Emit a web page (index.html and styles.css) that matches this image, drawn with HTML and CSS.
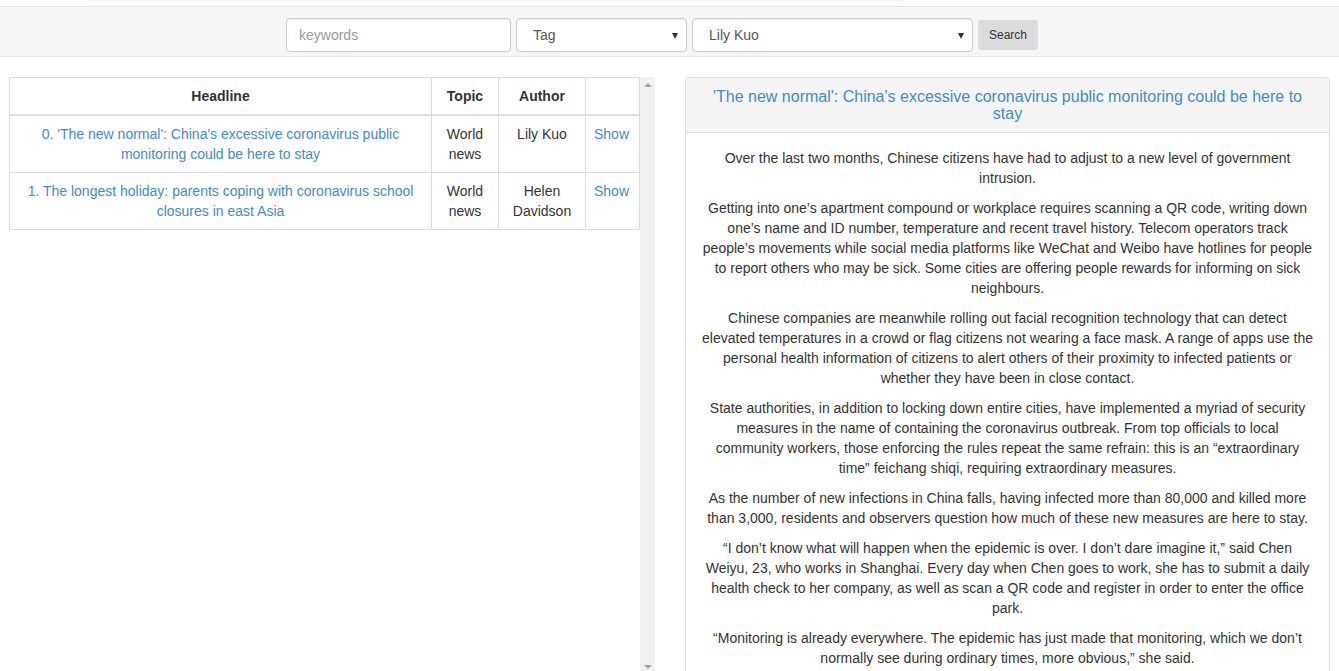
FILE: index.html
```html
<!DOCTYPE html>
<html lang="en">
<head>
<meta charset="utf-8">
<title>News</title>
<link rel="stylesheet" href="styles.css">
</head>
<body>
<div class="topstrip"><div class="topstrip-edge"></div></div>
<nav class="navbar">
  <form class="search-form">
    <input class="form-control kw" type="text" placeholder="keywords">
    <span class="select-wrap tag">
      <select class="form-control">
        <option>Tag</option>
      </select>
    </span>
    <span class="select-wrap author">
      <select class="form-control">
        <option>Lily Kuo</option>
      </select>
    </span>
    <button class="btn-search" type="button">Search</button>
  </form>
</nav>
<main class="main">
  <section class="list-pane">
    <div class="list-content">
      <table class="news-table">
        <colgroup>
          <col class="c-head"><col class="c-topic"><col class="c-author"><col class="c-show">
        </colgroup>
        <thead>
          <tr><th>Headline</th><th>Topic</th><th>Author</th><th></th></tr>
        </thead>
        <tbody>
          <tr>
            <td><a href="#">0. 'The new normal': China's excessive coronavirus public monitoring could be here to stay</a></td>
            <td>World news</td>
            <td>Lily Kuo</td>
            <td><a href="#">Show</a></td>
          </tr>
          <tr>
            <td><a href="#">1. The longest holiday: parents coping with coronavirus school closures in east Asia</a></td>
            <td>World news</td>
            <td>Helen Davidson</td>
            <td><a href="#">Show</a></td>
          </tr>
        </tbody>
      </table>
    </div>
    <div class="scroll-track" aria-hidden="true">
      <span class="arrow-up"></span>
      <span class="arrow-down"></span>
    </div>
  </section>
  <article class="panel">
    <header class="panel-heading">
      <h3 class="panel-title"><a href="#">'The new normal': China's excessive coronavirus public monitoring could be here to stay</a></h3>
    </header>
    <div class="panel-body">
      <p>Over the last two months, Chinese citizens have had to adjust to a new level of government intrusion.</p>
      <p>Getting into one’s apartment compound or workplace requires scanning a QR code, writing down one’s name and ID number, temperature and recent travel history. Telecom operators track people’s movements while social media platforms like WeChat and Weibo have hotlines for people to report others who may be sick. Some cities are offering people rewards for informing on sick neighbours.</p>
      <p>Chinese companies are meanwhile rolling out facial recognition technology that can detect elevated temperatures in a crowd or flag citizens not wearing a face mask. A range of apps use the personal health information of citizens to alert others of their proximity to infected patients or whether they have been in close contact.</p>
      <p>State authorities, in addition to locking down entire cities, have implemented a myriad of security measures in the name of containing the coronavirus outbreak. From top officials to local community workers, those enforcing the rules repeat the same refrain: this is an “extraordinary time” feichang shiqi, requiring extraordinary measures.</p>
      <p>As the number of new infections in China falls, having infected more than 80,000 and killed more than 3,000, residents and observers question how much of these new measures are here to stay.</p>
      <p>“I don’t know what will happen when the epidemic is over. I don’t dare imagine it,” said Chen Weiyu, 23, who works in Shanghai. Every day when Chen goes to work, she has to submit a daily health check to her company, as well as scan a QR code and register in order to enter the office park.</p>
      <p>“Monitoring is already everywhere. The epidemic has just made that monitoring, which we don’t normally see during ordinary times, more obvious,” she said.</p>
    </div>
  </article>
</main>
</body>
</html>
```

FILE: styles.css
```css
* { box-sizing: border-box; }

html, body {
  margin: 0;
  padding: 0;
  height: 100%;
  overflow: hidden;
}

body {
  font-family: "Liberation Sans", Arial, Helvetica, sans-serif;
  font-size: 14px;
  line-height: 20px;
  color: #333;
  background: #fff;
}

a {
  color: #428bca;
  text-decoration: none;
}

.topstrip {
  height: 6px;
  padding-left: 88px;
}

.topstrip-edge {
  width: 813px;
  height: 1px;
  background: #f1f1f1;
}

.navbar {
  border-top: 1px solid #e1e1e1;
  border-bottom: 1px solid #e7e7e7;
  background: #f6f6f6;
  height: 51px;
}

.search-form {
  display: flex;
  justify-content: center;
  align-items: flex-start;
  gap: 5px;
  padding: 11px 15px 0 0;
  margin: 0;
}

.form-control {
  display: block;
  width: 100%;
  height: 34px;
  border: 1px solid #ccc;
  border-radius: 4px;
  background: #fff;
  color: #555;
  font-family: "Liberation Sans", Arial, Helvetica, sans-serif;
  font-size: 14px;
  line-height: 20px;
  padding: 6px 12px;
  box-shadow: inset 0 1px 1px rgba(0,0,0,.075);
}

select.form-control {
  appearance: none;
  -webkit-appearance: none;
  padding-left: 16px;
  padding-right: 24px;
}

.form-control::placeholder { color: #999; }

.kw { width: 225px; }

.select-wrap {
  position: relative;
  display: block;
}

.select-wrap::after {
  content: "";
  position: absolute;
  right: 9px;
  top: 15px;
  border-left: 3.5px solid transparent;
  border-right: 3.5px solid transparent;
  border-top: 6px solid #333;
  pointer-events: none;
}

.tag { width: 171px; }
.author { width: 281px; }

.btn-search {
  margin-top: 2px;
  width: 60px;
  height: 30px;
  border: 1px solid #dcdcdc;
  border-radius: 3px;
  background: #dcdcdc;
  color: #333;
  font-family: "Liberation Sans", Arial, Helvetica, sans-serif;
  font-size: 12px;
  line-height: 18px;
  padding: 5px 0;
}

.main {
  display: flex;
  gap: 30px;
  padding: 20px 9px 0;
  align-items: flex-start;
}

.list-pane {
  flex: 0 0 646px;
  height: 594px;
  display: flex;
}

.list-content {
  flex: 0 0 631px;
}

.scroll-track {
  flex: 0 0 15px;
  background: #f1f1f1;
  display: flex;
  flex-direction: column;
  justify-content: space-between;
  align-items: center;
  padding: 6px 0 2px;
}

.arrow-up,
.arrow-down {
  display: block;
  width: 0;
  height: 0;
  border-left: 4px solid transparent;
  border-right: 4px solid transparent;
}

.arrow-up { border-bottom: 4px solid #a3a3a3; }
.arrow-down { border-top: 4px solid #a3a3a3; }

.news-table {
  width: 630px;
  border-collapse: collapse;
  table-layout: fixed;
}

.c-head { width: 422px; }
.c-topic { width: 67px; }
.c-author { width: 87px; }
.c-show { width: 54px; }

.news-table th,
.news-table td {
  border: 1px solid #ddd;
  padding: 8px;
  text-align: center;
  vertical-align: top;
  line-height: 20px;
}

.news-table th {
  font-weight: bold;
  border-bottom-width: 2px;
}

.news-table td:nth-child(4) {
  text-align: left;
}

.panel {
  flex: 1 1 auto;
  border: 1px solid #ddd;
  border-radius: 4px;
  background: #fff;
  box-shadow: 0 1px 1px rgba(0,0,0,.05);
}

.panel-heading {
  background: #f5f5f5;
  border-bottom: 1px solid #ddd;
  border-radius: 3px 3px 0 0;
  padding: 10px 15px;
  text-align: center;
}

.panel-title {
  margin: 0;
  font-size: 16px;
  font-weight: normal;
  line-height: 17px;
}

.panel-body {
  padding: 15px;
  text-align: center;
}

.panel-body p {
  margin: 0 0 10px;
}
```
